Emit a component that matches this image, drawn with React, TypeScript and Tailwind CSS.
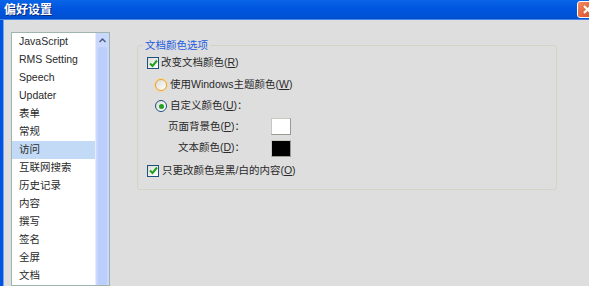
import React from "react";

const font = {
  fontFamily: '"Liberation Sans", "Noto Sans CJK SC", sans-serif',
};

const items = [
  "JavaScript",
  "RMS Setting",
  "Speech",
  "Updater",
  "表单",
  "常规",
  "访问",
  "互联网搜索",
  "历史记录",
  "内容",
  "撰写",
  "签名",
  "全屏",
  "文档",
];

function Checkbox() {
  return (
    <span className="flex h-[12px] w-[12px] items-center justify-center border border-[#1c5180] bg-gradient-to-br from-[#dcdcd7] to-white">
      <svg width="9" height="9" viewBox="0 0 9 9">
        <path d="M1 4.5 L3.5 7 L8 1.5" stroke="#21a121" strokeWidth="2" fill="none" />
      </svg>
    </span>
  );
}

function Radio({ checked, hover }: { checked?: boolean; hover?: boolean }) {
  return (
    <span
      className={`flex h-[12px] w-[12px] items-center justify-center rounded-full border bg-gradient-to-br from-[#dcdcd7] to-white ${
        hover ? "border-[#e8a33a] ring-1 ring-[#f8d68b]" : "border-[#1c5180]"
      }`}
    >
      {checked && <span className="h-[5px] w-[5px] rounded-full bg-[#21a121]" />}
    </span>
  );
}

function Key({ k }: { k: string }) {
  return <span className="underline underline-offset-1">{k}</span>;
}

export default function App() {
  return (
    <div
      className="flex h-[286px] w-[589px] flex-col overflow-hidden bg-[#dedede] text-[10.5px] text-[#2a2a2a]"
      style={font}
    >
      {/* Title bar */}
      <div className="flex h-[20px] shrink-0 items-center justify-between bg-gradient-to-b from-[#0a64e8] via-[#0055de] to-[#0050d0] border-b border-[#4a86e8]">
        <span className="pl-[4px] text-[12px] font-bold text-white [text-shadow:1px_1px_0_#0a2a80]">
          偏好设置
        </span>
        <span className="mr-[-8px] flex h-[17px] w-[20px] items-center justify-center rounded-[3px] border border-white bg-gradient-to-br from-[#f08a60] to-[#d8451c]">
          <svg width="9" height="9" viewBox="0 0 9 9">
            <path d="M1 1 L8 8 M8 1 L1 8" stroke="white" strokeWidth="2" />
          </svg>
        </span>
      </div>

      {/* Body */}
      <div className="flex min-h-0 flex-1 border-l-[3px] border-[#0055de]">
        <div className="flex-1 flex min-h-0 border-l border-[#7aa2ee]">
          {/* List */}
          <div className="ml-[7px] mt-[12px] flex w-[99px] border border-[#9fb5ae] bg-white">
            <div className="flex-1">
              {items.map((it) => (
                <div
                  key={it}
                  className={`flex h-[18px] items-center pl-[7px] ${
                    it === "访问" ? "bg-[#c3daf6]" : ""
                  }`}
                >
                  {it}
                </div>
              ))}
            </div>
            <div className="flex w-[14px] flex-col bg-[#c9d8fc] border-l border-[#e4ecfe]">
              <div className="flex h-[14px] items-center justify-center">
                <svg width="7" height="5" viewBox="0 0 7 5">
                  <path d="M0.5 4 L3.5 1 L6.5 4" stroke="#4d6185" strokeWidth="1.5" fill="none" />
                </svg>
              </div>
              <div className="mx-[2px] flex-1 rounded-[2px] bg-[#bccefb]" />
            </div>
          </div>

          {/* Right panel */}
          <div className="flex-1 pl-[27px] pr-[32px] pt-[18px]">
            <fieldset className="rounded-[3px] border border-[#d4d3c6] pb-[7px]">
              <legend className="ml-[5px] px-[2px] text-[#1d5be0] leading-[14px]">
                文档颜色选项
              </legend>
              <div className="pl-[9px]">
                <div className="flex h-[22px] items-center gap-[2px]">
                  <Checkbox />
                  <span>
                    改变文档颜色(<Key k="R" />)
                  </span>
                </div>
                <div className="ml-[8px] flex h-[22px] items-center gap-[3px]">
                  <Radio hover />
                  <span>
                    使用Windows主题颜色(<Key k="W" />)
                  </span>
                </div>
                <div className="ml-[8px] flex h-[20px] items-center gap-[3px]">
                  <Radio checked />
                  <span>
                    自定义颜色(<Key k="U" />)：
                  </span>
                </div>
                <div className="flex h-[21px] items-center">
                  <span className="w-[98px] text-right">
                    页面背景色(<Key k="P" />)：
                  </span>
                  <span className="ml-[26px] h-[17px] w-[20px] border border-[#c8c8c0] border-r-[#9a9a90] border-b-[#9a9a90] bg-white" />
                </div>
                <div className="flex h-[22px] items-center">
                  <span className="w-[98px] text-right">
                    文本颜色(<Key k="D" />)：
                  </span>
                  <span className="ml-[26px] h-[17px] w-[20px] border border-[#c8c8c0] border-r-[#9a9a90] border-b-[#9a9a90] bg-black" />
                </div>
                <div className="flex h-[23px] items-center gap-[3px]">
                  <Checkbox />
                  <span>
                    只更改颜色是黑/白的内容(<Key k="O" />)
                  </span>
                </div>
              </div>
            </fieldset>
          </div>
        </div>
      </div>
    </div>
  );
}
